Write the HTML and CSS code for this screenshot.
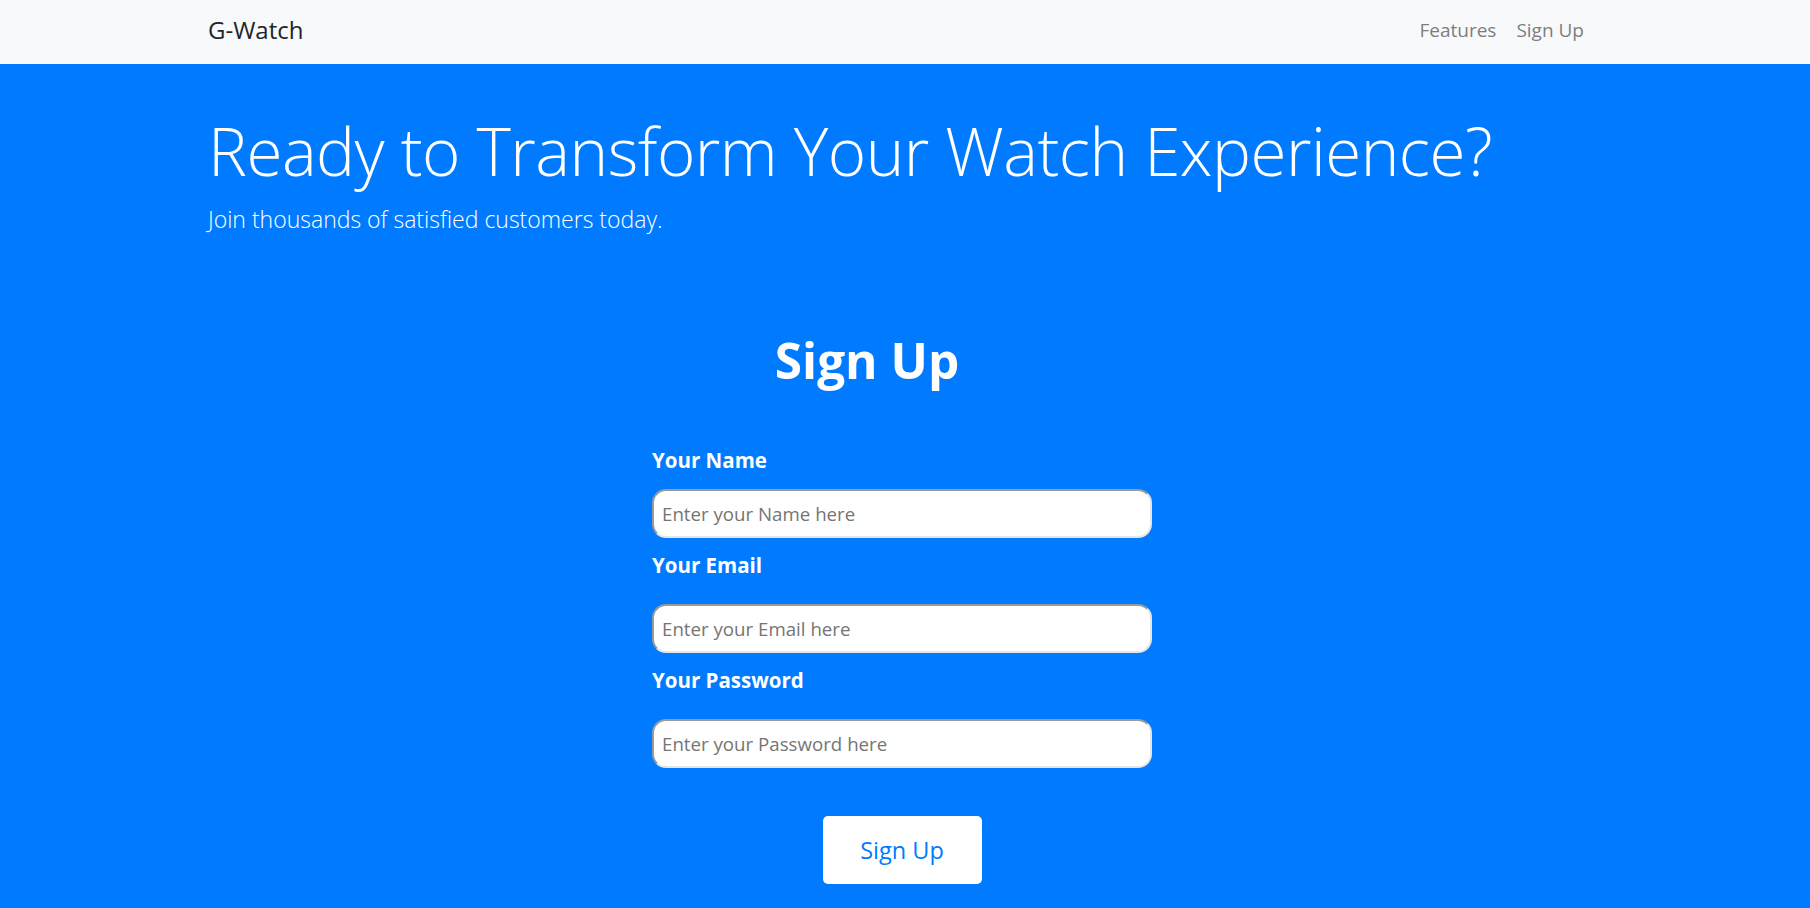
FILE: index.html
```html
<!DOCTYPE html>
<html lang="en">
<head>
<meta charset="utf-8">
<title>G-Watch</title>
<link rel="stylesheet" href="styles.css">
</head>
<body>
<nav class="navbar">
  <div class="nav-inner">
    <a class="brand" href="#">G-Watch</a>
    <div class="nav-links">
      <a class="nav-link" href="#features">Features</a>
      <a class="nav-link" href="#signup">Sign Up</a>
    </div>
  </div>
</nav>
<main class="hero">
  <div class="hero-inner">
    <h1 class="display">Ready to Transform Your Watch Experience?</h1>
    <p class="lead">Join thousands of satisfied customers today.</p>
  </div>
  <section class="signup" id="signup">
    <h2 class="signup-title">Sign Up</h2>
    <form class="signup-form">
      <div class="field field-first">
        <label class="field-label" for="name">Your Name</label>
        <input class="field-input" id="name" type="text" placeholder="Enter your Name here">
      </div>
      <div class="field">
        <label class="field-label" for="email">Your Email</label>
        <input class="field-input" id="email" type="email" placeholder="Enter your Email here">
      </div>
      <div class="field">
        <label class="field-label" for="password">Your Password</label>
        <input class="field-input" id="password" type="password" placeholder="Enter your Password here">
      </div>
      <div class="actions">
        <button class="submit" type="submit">Sign Up</button>
      </div>
    </form>
  </section>
</main>
</body>
</html>
```
FILE: styles.css
```css
* { box-sizing: border-box; }

html, body {
  margin: 0;
  padding: 0;
}

body {
  font-family: "Open Sans", "Noto Sans", "Liberation Sans", sans-serif;
  background: #007bff;
  color: #fff;
  min-height: 908px;
}

a { text-decoration: none; }

.navbar {
  background: #f8f9fa;
  height: 64px;
}

.nav-inner {
  height: 64px;
  padding: 0 216px 4px 208px;
  display: flex;
  align-items: center;
  justify-content: space-between;
}

.brand {
  color: #212529;
  font-size: 24px;
  font-weight: 400;
  line-height: 1;
}

.nav-links {
  display: flex;
}

.nav-link {
  color: #7d7e80;
  font-size: 19px;
  padding: 0 10px;
  line-height: 1;
}

.hero-inner {
  padding: 48px 216px 0 208px;
}

.display {
  margin: 0;
  font-size: 65.5px;
  font-weight: 300;
  line-height: 1.2;
  letter-spacing: -0.5px;
}

.lead {
  margin: 11.5px 0 0;
  font-size: 23px;
  font-weight: 300;
  line-height: 1.5;
}

.signup {
  width: 500px;
  margin: 0 auto;
  position: relative;
  left: -3px;
}

.signup-title {
  margin: 94px 0 0;
  font-size: 49.5px;
  font-weight: 700;
  line-height: 1.2;
  text-align: center;
  padding-right: 70px;
}

.signup-form {
  margin-top: 55.5px;
}

.field {
  display: flex;
  flex-direction: column;
  margin-top: 11.2px;
}

.field-first { margin-top: 0; }

.field-label {
  font-size: 20.5px;
  font-weight: 700;
  line-height: 30px;
  margin-bottom: 24.7px;
}

.field-first .field-label { margin-bottom: 14px; }

.field-input {
  width: 500px;
  height: 49px;
  border-width: 2px;
  border-style: solid;
  border-color: #9a9a9a #e6e6e6 #e6e6e6 #9a9a9a;
  border-radius: 14px;
  background: #fff;
  padding: 0 8px;
  font-family: inherit;
  font-size: 18.7px;
  color: #495057;
  outline: none;
}

.field-input::placeholder {
  color: #757575;
}

.actions {
  display: flex;
  justify-content: center;
  margin-top: 48px;
}

.submit {
  width: 159px;
  height: 68px;
  background: #fff;
  color: #007bff;
  border: none;
  border-radius: 5px;
  font-family: inherit;
  font-size: 23.5px;
  font-weight: 400;
  cursor: pointer;
}
```
